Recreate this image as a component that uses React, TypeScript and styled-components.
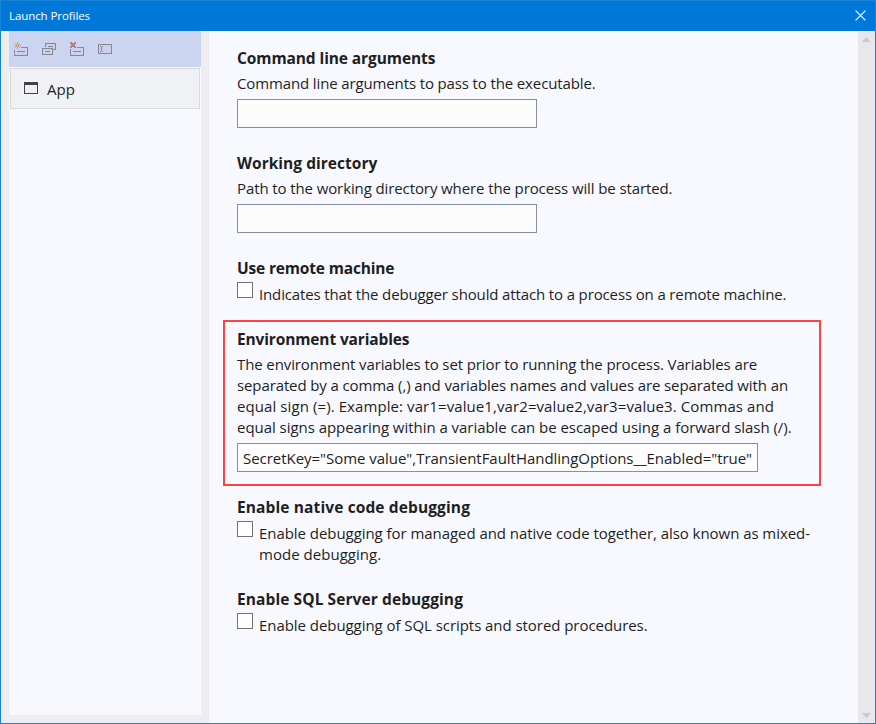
import React from "react";
import styled, { createGlobalStyle } from "styled-components";

const GlobalStyle = createGlobalStyle`
  * { box-sizing: border-box; }
  body { margin: 0; overflow: hidden; }
`;

const Dialog = styled.div`
  display: flex;
  flex-direction: column;
  width: 876px;
  height: 724px;
  border: 1px solid #1883d7;
  background: #eeeef2;
  color: #1e1e1e;
  font-family: "Open Sans", "Noto Sans", sans-serif;
  font-size: 15px;
  line-height: 21px;
`;

const TitleBar = styled.header`
  display: flex;
  flex: none;
  align-items: center;
  justify-content: space-between;
  height: 30px;
  padding: 0 9px 2px 8px;
  background: #0078d7;
  color: #fff;
  font-size: 11.5px;
  letter-spacing: -0.08px;
`;

const CloseButton = styled.button`
  display: flex;
  padding: 0;
  border: 0;
  background: none;
  color: #fff;
`;

const Body = styled.div`
  display: flex;
  flex: 1;
  min-height: 0;
`;

const Sidebar = styled.aside`
  width: 192px;
  margin: 0 8px;
  height: 684px;
  background: #f7f9fe;
`;

const Toolbar = styled.div`
  display: flex;
  align-items: center;
  gap: 12px;
  height: 36px;
  padding-left: 4px;
  background: #ccd5f0;
`;

const ToolButton = styled.button`
  display: flex;
  padding: 0;
  border: 0;
  background: none;
`;

const ProfileItem = styled.div`
  display: flex;
  align-items: center;
  gap: 8px;
  height: 41px;
  margin: 1px;
  padding: 1px 0 0 12px;
  border: 1px solid #d9d9dc;
  background: #eff1f5;
`;

const ProfileIcon = styled.span`
  display: flex;
  margin-top: -2px;
`;

const Content = styled.main`
  flex: 1;
  padding: 17px 0 0 28px;
  background: #f7f9fe;
`;

const Section = styled.section<{ $gap: number }>`
  margin-bottom: ${(p) => p.$gap}px;
`;

const Highlight = styled.div`
  width: 598px;
  height: 166px;
  margin: -9px 0 11px -14px;
  padding: 7px 12px 0;
  border: 2px solid #fb4245;
`;

const Heading = styled.h2<{ $track: number }>`
  margin: 0;
  font-size: 15.5px;
  font-weight: 700;
  line-height: 21px;
  letter-spacing: ${(p) => p.$track}px;
`;

const Description = styled.p`
  margin: 4px 0 5px;
`;

const Line = styled.span<{ $track: number }>`
  display: block;
  white-space: nowrap;
  letter-spacing: ${(p) => p.$track}px;
`;

const TextBox = styled.input<{ $width: number }>`
  display: block;
  width: ${(p) => p.$width}px;
  height: 29px;
  padding: 1px 5px 0;
  border: 1px solid #868fa5;
  border-radius: 0;
  outline: 0;
  background: #fcfcfc;
  color: #1e1e1e;
  font: inherit;
  letter-spacing: -0.035px;
`;

const CheckRow = styled.label`
  display: flex;
  gap: 6px;
`;

const CheckBox = styled.input`
  appearance: none;
  flex: none;
  width: 16px;
  height: 16px;
  margin: 3px 0 0;
  border: 1px solid #717171;
  background: #fefefe;
`;

const CheckText = styled.span`
  padding-top: 5px;
`;

const ScrollBar = styled.div`
  display: flex;
  flex-direction: column;
  align-items: center;
  justify-content: space-between;
  width: 17px;
  padding: 6px 0 5px;
  background: #e7e7ec;
`;

const stroke = "#848993";

const NewIcon = () => (
  <svg width="16" height="16" viewBox="0 0 16 16" shapeRendering="crispEdges">
    <path d="M2 9h12v5H2z" fill="#cfcfeb" />
    <path d="M8 6.5h6.5v8h-13V9M4 10.5h8" fill="none" stroke={stroke} />
    <path d="M4.5 1v2M4.5 6v2M1 4.5h2M6 4.5h2" fill="none" stroke="#c3a47c" />
    <path d="M2 2h1v1H2zM6 2h1v1H6zM2 6h1v1H2zM6 6h1v1H6zM3 3h3v1H3zM3 5h3v1H3zM3 4h1v1H3zM5 4h1v1H5z" fill="#c3a47c" />
  </svg>
);

const CopyIcon = () => (
  <svg width="16" height="16" viewBox="0 0 16 16" shapeRendering="crispEdges">
    <path d="M5 3h9v5H5zM2 8h9v5H2z" fill="#cfcfeb" />
    <path d="M4.5 6V2.5h10v6H12M7 5.5h5M1.5 7.5h10v6h-10zM4 10.5h5" fill="none" stroke={stroke} />
  </svg>
);

const DeleteIcon = () => (
  <svg width="16" height="16" viewBox="0 0 16 16" shapeRendering="crispEdges">
    <path d="M2 9h12v5H2z" fill="#cfcfeb" />
    <path d="M8 6.5h6.5v8h-13V8M4 10.5h8" fill="none" stroke={stroke} />
    <path d="M1 1h2v1h2V1h2v2H6v2h1v2H5V6H3v1H1V5h1V3H1z" fill="#b87f88" />
  </svg>
);

const RenameIcon = () => (
  <svg width="16" height="16" viewBox="0 0 16 16" shapeRendering="crispEdges">
    <path d="M1.5 3.5h13v9h-13z" fill="#cfcfeb" stroke={stroke} />
    <path d="M3 5h1v1H3zM5 5h1v1H5zM4 6h1v4H4zM3 10h1v1H3zM5 10h1v1H5z" fill={stroke} />
  </svg>
);

const AppIcon = () => (
  <svg width="16" height="16" viewBox="0 0 16 16" shapeRendering="crispEdges">
    <path d="M0 1h16v14H0z" fill="#f7f7fa" />
    <path d="M1.5 3v10.5h13V3" fill="#f0eff8" stroke="#424242" />
    <path d="M1 2h14v3H1z" fill="#424242" />
  </svg>
);

const CloseIcon = () => (
  <svg width="11" height="11" viewBox="0 0 11 11">
    <path d="M.6.6l9.8 9.8M10.4.6L.6 10.4" fill="none" stroke="currentColor" strokeWidth="1.2" />
  </svg>
);

const Arrow = ({ d }: { d: string }) => (
  <svg width="9" height="5" viewBox="0 0 9 5">
    <path d={d} fill="#c9cad1" />
  </svg>
);

type LineData = [string, number];

const renderLines = (lines: LineData[]) =>
  lines.map(([text, track]) => (
    <Line key={text} $track={track}>
      {text}
    </Line>
  ));

interface FieldProps {
  title: string;
  track: number;
  lines: LineData[];
  gap: number;
}

const TextField = ({ title, track, lines, gap, width = 300, value = "" }: FieldProps & { width?: number; value?: string }) => (
  <Section $gap={gap}>
    <Heading $track={track}>{title}</Heading>
    <Description>{renderLines(lines)}</Description>
    <TextBox type="text" $width={width} defaultValue={value} spellCheck={false} />
  </Section>
);

const CheckField = ({ title, track, lines, gap }: FieldProps) => (
  <Section $gap={gap}>
    <Heading $track={track}>{title}</Heading>
    <CheckRow>
      <CheckBox type="checkbox" />
      <CheckText>{renderLines(lines)}</CheckText>
    </CheckRow>
  </Section>
);

export default function App() {
  return (
    <>
      <GlobalStyle />
      <Dialog>
        <TitleBar>
          <span>Launch Profiles</span>
          <CloseButton aria-label="Close">
            <CloseIcon />
          </CloseButton>
        </TitleBar>
        <Body>
          <Sidebar>
            <Toolbar>
              <ToolButton aria-label="New profile"><NewIcon /></ToolButton>
              <ToolButton aria-label="Duplicate profile"><CopyIcon /></ToolButton>
              <ToolButton aria-label="Delete profile"><DeleteIcon /></ToolButton>
              <ToolButton aria-label="Rename profile"><RenameIcon /></ToolButton>
            </Toolbar>
            <ProfileItem>
              <ProfileIcon><AppIcon /></ProfileIcon>
              <span>App</span>
            </ProfileItem>
          </Sidebar>
          <Content>
            <TextField
              title="Command line arguments"
              track={-0.1}
              gap={25}
              lines={[["Command line arguments to pass to the executable.", -0.13]]}
            />
            <TextField
              title="Working directory"
              track={0.03}
              gap={25}
              lines={[["Path to the working directory where the process will be started.", -0.105]]}
            />
            <CheckField
              title="Use remote machine"
              track={-0.17}
              gap={24}
              lines={[["Indicates that the debugger should attach to a process on a remote machine.", -0.135]]}
            />
            <Highlight>
              <TextField
                title="Environment variables"
                track={-0.14}
                gap={0}
                width={521}
                value={'SecretKey="Some value",TransientFaultHandlingOptions__Enabled="true"'}
                lines={[
                  ["The environment variables to set prior to running the process. Variables are", -0.11],
                  ["separated by a comma (,) and variables names and values are separated with an", -0.111],
                  ["equal sign (=). Example: var1=value1,var2=value2,var3=value3. Commas and", 0.089],
                  ["equal signs appearing within a variable can be escaped using a forward slash (/).", -0.04],
                ]}
              />
            </Highlight>
            <CheckField
              title="Enable native code debugging"
              track={0.119}
              gap={24}
              lines={[
                ["Enable debugging for managed and native code together, also known as mixed-", -0.052],
                ["mode debugging.", 0.03],
              ]}
            />
            <CheckField
              title="Enable SQL Server debugging"
              track={0.091}
              gap={0}
              lines={[["Enable debugging of SQL scripts and stored procedures.", -0.055]]}
            />
          </Content>
          <ScrollBar>
            <Arrow d="M4.5 0L9 5H0z" />
            <Arrow d="M0 0h9L4.5 5z" />
          </ScrollBar>
        </Body>
      </Dialog>
    </>
  );
}
